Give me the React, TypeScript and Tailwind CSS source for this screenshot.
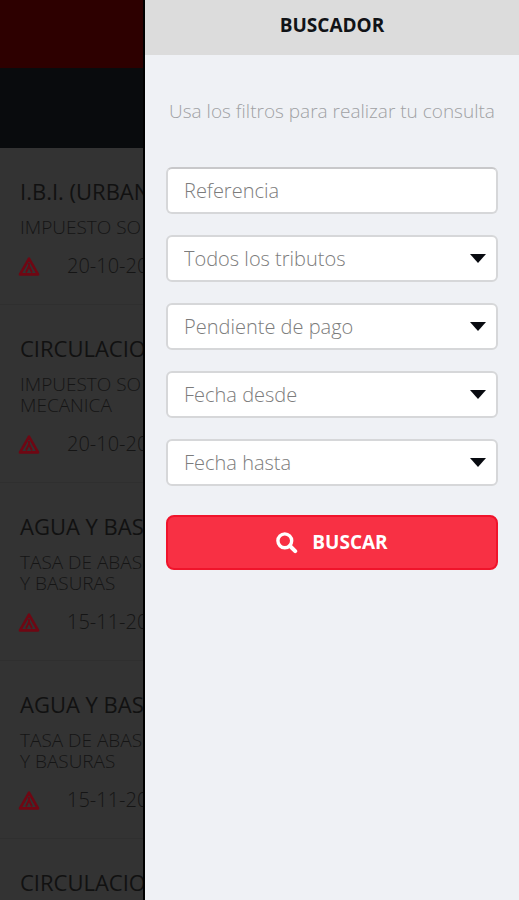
import React from "react";

type Tax = { title: string; lines: string[]; date: string };

const taxes: Tax[] = [
  { title: "I.B.I. (URBAN", lines: ["IMPUESTO SO"], date: "20-10-20" },
  { title: "CIRCULACIO", lines: ["IMPUESTO SO", "MECANICA"], date: "20-10-20" },
  { title: "AGUA Y BAS", lines: ["TASA DE ABAS", "Y BASURAS"], date: "15-11-20" },
  { title: "AGUA Y BAS", lines: ["TASA DE ABAS", "Y BASURAS"], date: "15-11-20" },
  { title: "CIRCULACIO", lines: [], date: "" },
];

const filters = ["Todos los tributos", "Pendiente de pago", "Fecha desde", "Fecha hasta"];

function WarningIcon() {
  return (
    <svg viewBox="0 0 22 19" className="h-[19px] w-[22px] shrink-0" aria-hidden="true">
      <path d="M11 1.6 L20 17.4 H2 Z" fill="none" stroke="#6f0713" strokeWidth="2.6" strokeLinejoin="round" />
      <path d="M11 6 V9 M11 9 L8 15.5 M11 9 L14 15.5" fill="none" stroke="#6f0713" strokeWidth="1.8" />
    </svg>
  );
}

function TaxItem({ tax }: { tax: Tax }) {
  return (
    <li className="border-b border-[#2f2f2f] pt-7 pb-6 pl-5 whitespace-nowrap">
      <h2 className="text-[22px] leading-[30px] text-[#111111]">{tax.title}</h2>
      {tax.lines.length > 0 && (
        <p className="mt-[11px] text-[19px] leading-[21px] font-light text-[#151515]">
          {tax.lines.map((line) => (
            <span key={line} className="block">{line}</span>
          ))}
        </p>
      )}
      {tax.date && (
        <div className="mt-[14px] flex h-7 items-center gap-[27px] text-[20px] font-light text-[#151515]">
          <span className="-ml-[2px] flex"><WarningIcon /></span>
          <time>{tax.date}</time>
        </div>
      )}
    </li>
  );
}

function FilterSelect({ label }: { label: string }) {
  return (
    <div className="relative">
      <select
        aria-label={label}
        className="block h-[47px] w-full appearance-none rounded-md border-2 border-[#d6d7d9] bg-white px-4 text-[20px] font-light text-[#7c7c7c]"
      >
        <option>{label}</option>
      </select>
      <svg viewBox="0 0 16 9" className="pointer-events-none absolute top-[19px] right-3 h-[9px] w-4" aria-hidden="true">
        <path d="M0 0 H16 L8 9 Z" fill="#080a10" />
      </svg>
    </div>
  );
}

export default function App() {
  return (
    <div className="flex h-screen overflow-hidden bg-[#eff1f5] font-['Open_Sans','Noto_Sans',sans-serif]">
      <div className="w-[145px] shrink-0 overflow-hidden border-r-2 border-black bg-[#333333]">
        <div className="h-[68px] bg-[#2d0000]" />
        <div className="h-20 bg-[#090b0d]" />
        <ul>
          {taxes.map((tax, i) => (
            <TaxItem key={i} tax={tax} />
          ))}
        </ul>
      </div>
      <aside className="min-w-0 flex-1">
        <header className="flex h-[55px] items-center justify-center bg-[#dcdcdc] pb-[6px]">
          <h1 className="text-[19px] leading-6 font-bold text-[#111317]">BUSCADOR</h1>
        </header>
        <form className="px-[21px] pt-[42px]" onSubmit={(e) => e.preventDefault()}>
          <p className="text-center text-[19px] leading-7 font-light whitespace-nowrap text-[#a0a1a4]">
            Usa los filtros para realizar tu consulta
          </p>
          <div className="mt-[42px] flex flex-col gap-[21px]">
            <input
              type="text"
              aria-label="Referencia"
              placeholder="Referencia"
              className="block h-[47px] w-full rounded-md border-2 border-[#d6d7d9] border-t-[#c8c8ca] bg-white px-4 text-[20px] font-light placeholder:text-[#7c7c7c]"
            />
            {filters.map((label) => (
              <FilterSelect key={label} label={label} />
            ))}
          </div>
          <button
            type="submit"
            className="mt-[29px] flex h-[55px] w-full items-center justify-center gap-[14px] rounded-lg border-2 border-[#f0142b] bg-[#f83044] text-[19px] font-bold text-white"
          >
            <svg viewBox="0 0 22 22" className="h-[22px] w-[22px]" fill="none" stroke="currentColor" aria-hidden="true">
              <circle cx="8.8" cy="8.8" r="6.9" strokeWidth="3.4" />
              <path d="M14 14 L19.2 19.2" strokeWidth="4" strokeLinecap="round" />
            </svg>
            BUSCAR
          </button>
        </form>
      </aside>
    </div>
  );
}
